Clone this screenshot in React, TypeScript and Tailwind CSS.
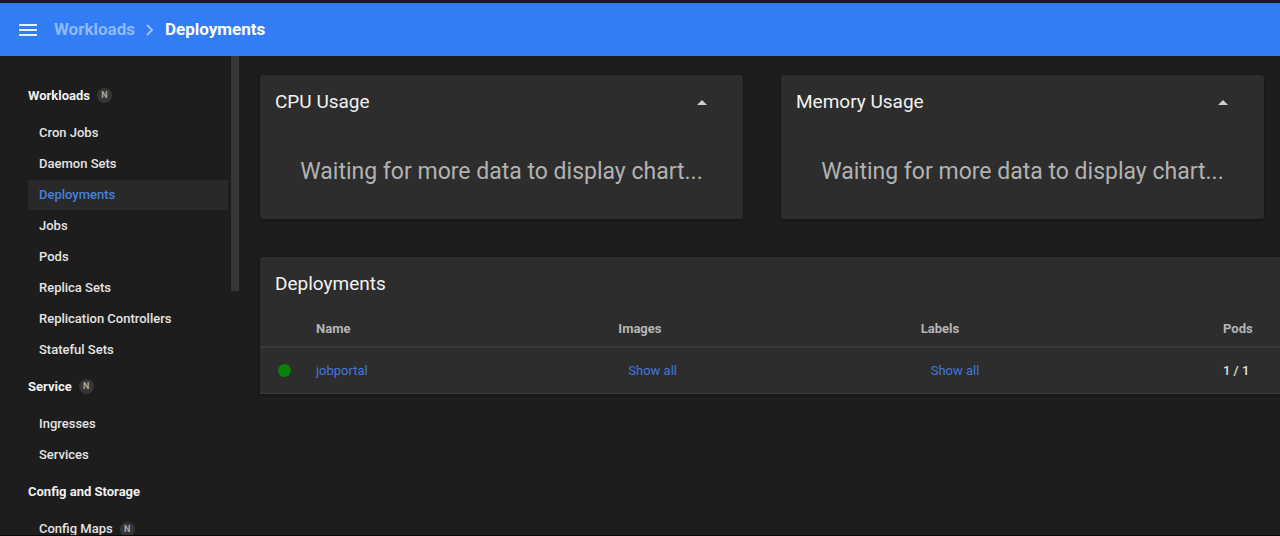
import React from "react";

type NavItem = { label: string; badge?: boolean; active?: boolean };
type NavGroup = { title: string; badge?: boolean; items: NavItem[] };

const groups: NavGroup[] = [
  {
    title: "Workloads",
    badge: true,
    items: [
      { label: "Cron Jobs" },
      { label: "Daemon Sets" },
      { label: "Deployments", active: true },
      { label: "Jobs" },
      { label: "Pods" },
      { label: "Replica Sets" },
      { label: "Replication Controllers" },
      { label: "Stateful Sets" },
    ],
  },
  { title: "Service", badge: true, items: [{ label: "Ingresses" }, { label: "Services" }] },
  { title: "Config and Storage", items: [{ label: "Config Maps", badge: true }] },
];

const deployments = [{ name: "jobportal", pods: "1 / 1" }];

function Badge() {
  return (
    <span className="flex size-[15px] items-center justify-center rounded-full bg-[#363637] pt-px text-[9px] font-bold text-[#a8a8a8]">
      N
    </span>
  );
}

function Header() {
  return (
    <header className="flex h-[53px] shrink-0 items-center bg-[#327df5] px-[18px] pt-px">
      <button type="button" aria-label="Toggle navigation" className="flex size-5 items-center justify-center text-[#e2f2f8]">
        <svg viewBox="0 0 20 20" className="size-5" fill="none" stroke="currentColor" strokeWidth="2">
          <path d="M1 5h18M1 10h18M1 15h18" />
        </svg>
      </button>
      <nav aria-label="Breadcrumb" className="ml-4 flex items-center text-[17px] font-bold">
        <a href="#workloads" className="text-[#8fb9fa]">Workloads</a>
        <svg viewBox="0 0 10 12" className="mx-[10px] h-3 w-[10px] text-[#9cc0fa]" fill="none" stroke="currentColor" strokeWidth="2">
          <path d="M2 1l5 5-5 5" />
        </svg>
        <span className="text-white">Deployments</span>
      </nav>
    </header>
  );
}

function Sidebar() {
  return (
    <aside className="flex w-[239px] shrink-0 items-start justify-between overflow-hidden pl-7">
      <nav aria-label="Resources" className="w-[200px] shrink-0 pt-[18px]">
        {groups.map((group) => (
          <section key={group.title}>
            <h2 className="flex h-[43px] items-center gap-[7px] text-[13px] font-bold text-[#f0f0f0]">
              <a href="#group">{group.title}</a>
              {group.badge && <Badge />}
            </h2>
            <ul>
              {group.items.map((item) => (
                <li key={item.label} className="pt-px">
                  <a
                    href="#item"
                    className={
                      item.active
                        ? "flex h-[30px] items-center bg-[#292929] pl-[11px] text-[13px] font-medium text-[#4482db]"
                        : "flex h-[30px] items-center gap-[7px] pl-[11px] text-[13px] font-medium text-[#e4e4e4]"
                    }
                  >
                    {item.label}
                    {item.badge && <Badge />}
                  </a>
                </li>
              ))}
            </ul>
          </section>
        ))}
      </nav>
      <div aria-hidden="true" className="h-[235px] w-2 bg-[#373737]" />
    </aside>
  );
}

function UsageCard({ title }: { title: string }) {
  return (
    <section className="h-36 rounded-[3px] bg-[#2d2d2d] shadow-[0_1px_3px_rgba(0,0,0,0.35)]">
      <div className="flex h-[54px] items-center justify-between pr-9 pl-[15px]">
        <h2 className="text-[19px] text-[#f2f2f2]">{title}</h2>
        <button type="button" aria-label={"Collapse " + title} className="text-[#d0d0d0]">
          <svg viewBox="0 0 10 5" className="h-[5px] w-[10px]" fill="currentColor">
            <path d="M0 5l5-5 5 5z" />
          </svg>
        </button>
      </div>
      <p className="pt-[27px] text-center text-[23px] leading-8 text-[#b2b2b2]">Waiting for more data to display chart...</p>
    </section>
  );
}

function DeploymentsCard() {
  return (
    <section className="rounded-tl-[3px] bg-[#2d2d2d] shadow-[0_1px_3px_rgba(0,0,0,0.35)]">
      <h2 className="flex h-[52px] items-center pt-[2px] pl-[15px] text-[19px] text-[#f2f2f2]">Deployments</h2>
      <table className="w-full table-fixed border-collapse text-left text-[13px]">
        <colgroup>
          <col className="w-14" />
          <col />
          <col />
          <col />
          <col className="w-[57px]" />
        </colgroup>
        <thead>
          <tr className="h-[38px] border-b-2 border-[#383838] text-[#b5b5b5]">
            <td />
            <th scope="col" className="pt-[2px] font-bold">Name</th>
            <th scope="col" className="pt-[2px] font-bold">Images</th>
            <th scope="col" className="pt-[2px] font-bold">Labels</th>
            <th scope="col" className="pt-[2px] font-bold">Pods</th>
          </tr>
        </thead>
        <tbody>
          {deployments.map((d) => (
            <tr key={d.name} className="h-[46px] border-b border-[#3c3c3c]">
              <td className="pl-[18px]">
                <span role="img" aria-label="Running" className="block size-[13px] rounded-full bg-[#0a820a]" />
              </td>
              <td><a href="#jobportal" className="text-[#4078dd]">{d.name}</a></td>
              <td className="pl-[10px]"><button type="button" className="text-[#4078dd]">Show all</button></td>
              <td className="pl-[10px]"><button type="button" className="text-[#4078dd]">Show all</button></td>
              <td className="font-medium text-[#e0e0e0]">{d.pods}</td>
            </tr>
          ))}
        </tbody>
      </table>
    </section>
  );
}

export default function App() {
  return (
    <div className="flex h-screen flex-col overflow-hidden border-t-[3px] border-b border-t-[#1b1c20] border-b-[#0e080a] bg-[#1d1d1d] font-['Roboto',sans-serif]">
      <Header />
      <div className="flex min-h-0 flex-1">
        <Sidebar />
        <main className="min-w-0 flex-1 overflow-hidden pt-[19px] pl-[21px]">
          <div className="mb-[38px] grid grid-cols-2 gap-[38px] pr-4">
            <UsageCard title="CPU Usage" />
            <UsageCard title="Memory Usage" />
          </div>
          <DeploymentsCard />
        </main>
      </div>
    </div>
  );
}
